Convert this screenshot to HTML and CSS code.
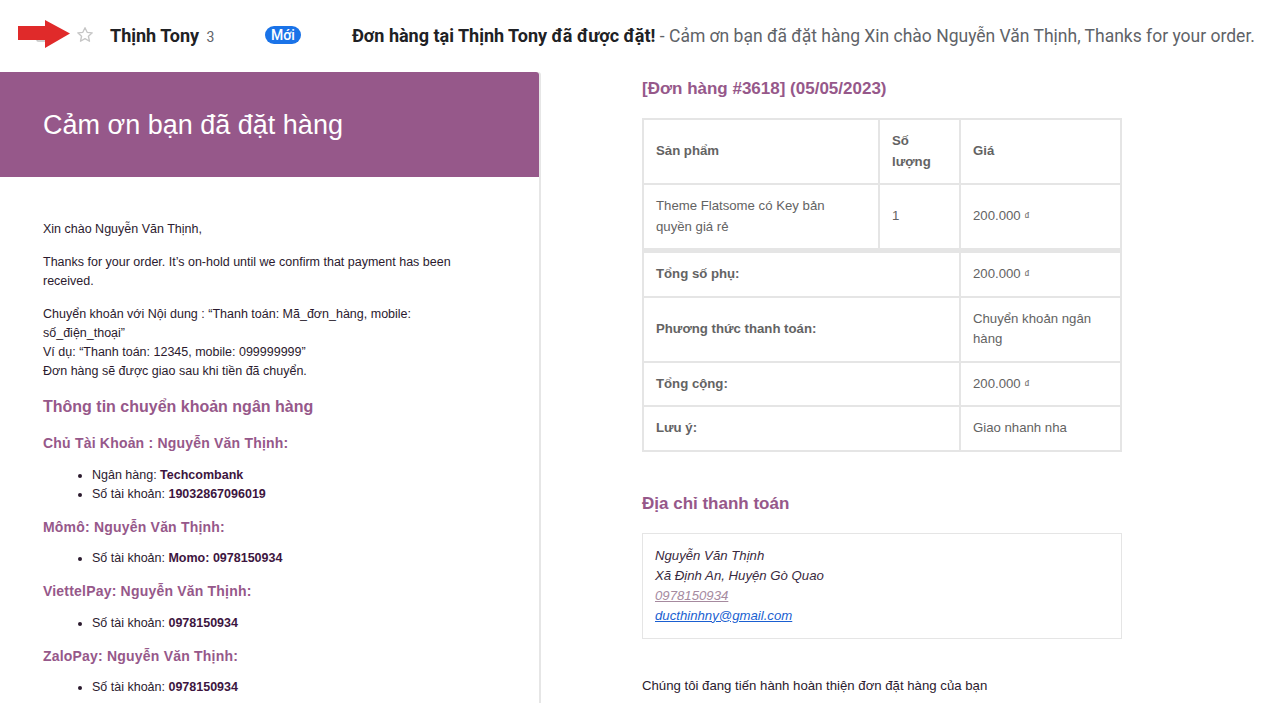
FILE: index.html
```html
<!DOCTYPE html>
<html lang="vi">
<head>
    <meta charset="UTF-8">
    <meta name="viewport" content="width=device-width, initial-scale=1.0">
    <title>Đơn hàng tại Thịnh Tony đã được đặt!</title>
    <link rel="stylesheet" href="styles.css">
</head>
<body>
    <!-- Dòng thư trong hộp thư -->
    <div class="mail-row">
        <svg class="pointer" width="56" height="32" viewBox="0 0 56 32">
            <rect x="20" y="9" width="12" height="13" rx="1" fill="none" stroke="#c2c2c2" stroke-width="1.5"/>
            <polygon points="1,7 28,7 28,1 53,14.5 28,29 28,21 1,21" fill="#e02a2a"/>
        </svg>
        <svg class="star" width="20" height="20" viewBox="0 0 24 24">
            <path d="M12 3.2l2.6 5.6 6.1.6-4.6 4.1 1.3 6-5.4-3.1-5.4 3.1 1.3-6-4.6-4.1 6.1-.6z" fill="none" stroke="#c6c6c6" stroke-width="1.6" stroke-linejoin="round"/>
        </svg>
        <div class="from">Thịnh Tony <span class="count">3</span></div>
        <span class="badge">Mới</span>
        <div class="subject"><b>Đơn hàng tại Thịnh Tony đã được đặt!</b> <span class="snippet">- Cảm ơn bạn đã đặt hàng Xin chào Nguyễn Văn Thịnh, Thanks for your order.</span></div>
    </div>

    <div class="mail-body">
        <!-- Cột trái -->
        <div class="email-card">
            <div class="email-header">
                <h1>Cảm ơn bạn đã đặt hàng</h1>
            </div>
            <div class="email-content">
                <p>Xin chào Nguyễn Văn Thịnh,</p>
                <p>Thanks for your order. It’s on-hold until we confirm that payment has been received.</p>
                <p>Chuyển khoản với Nội dung : “Thanh toán: Mã_đơn_hàng, mobile: số_điện_thoại”<br>
                Ví dụ: “Thanh toán: 12345, mobile: 099999999”<br>
                Đơn hàng sẽ được giao sau khi tiền đã chuyển.</p>

                <h2>Thông tin chuyển khoản ngân hàng</h2>

                <h3>Chủ Tài Khoản : Nguyễn Văn Thịnh:</h3>
                <ul>
                    <li>Ngân hàng: <strong>Techcombank</strong></li>
                    <li>Số tài khoản: <strong>19032867096019</strong></li>
                </ul>

                <h3>Mômô: Nguyễn Văn Thịnh:</h3>
                <ul>
                    <li>Số tài khoản: <strong>Momo: 0978150934</strong></li>
                </ul>

                <h3>ViettelPay: Nguyễn Văn Thịnh:</h3>
                <ul>
                    <li>Số tài khoản: <strong>0978150934</strong></li>
                </ul>

                <h3>ZaloPay: Nguyễn Văn Thịnh:</h3>
                <ul>
                    <li>Số tài khoản: <strong>0978150934</strong></li>
                </ul>
            </div>
        </div>

        <!-- Cột phải -->
        <div class="order-col">
            <h2>[Đơn hàng #3618] (05/05/2023)</h2>

            <table class="order-table">
                <thead>
                    <tr>
                        <th class="col-product">Sản phẩm</th>
                        <th class="col-qty">Số lượng</th>
                        <th class="col-price">Giá</th>
                    </tr>
                </thead>
                <tbody>
                    <tr>
                        <td>Theme Flatsome có Key bản quyền giá rẻ</td>
                        <td>1</td>
                        <td>200.000 <span class="currency">₫</span></td>
                    </tr>
                </tbody>
                <tfoot>
                    <tr class="first">
                        <th colspan="2">Tổng số phụ:</th>
                        <td>200.000 <span class="currency">₫</span></td>
                    </tr>
                    <tr>
                        <th colspan="2">Phương thức thanh toán:</th>
                        <td>Chuyển khoản ngân hàng</td>
                    </tr>
                    <tr>
                        <th colspan="2">Tổng cộng:</th>
                        <td>200.000 <span class="currency">₫</span></td>
                    </tr>
                    <tr>
                        <th colspan="2">Lưu ý:</th>
                        <td>Giao nhanh nha</td>
                    </tr>
                </tfoot>
            </table>

            <h2 class="address-title">Địa chỉ thanh toán</h2>
            <address class="address">
                Nguyễn Văn Thịnh<br>
                Xã Định An, Huyện Gò Quao<br>
                <a href="#" class="phone">0978150934</a><br>
                <a href="#" class="mail">ducthinhny@gmail.com</a>
            </address>

            <p class="closing">Chúng tôi đang tiến hành hoàn thiện đơn đặt hàng của bạn</p>
        </div>
    </div>
</body>
</html>
```

FILE: styles.css
```css
/* Reset */
* {
    margin: 0;
    padding: 0;
    box-sizing: border-box;
}

body {
    background: #fff;
    font-family: "Liberation Sans", Arial, sans-serif;
    width: 1280px;
    height: 720px;
    overflow: hidden;
}

/* Dòng thư */
.mail-row {
    display: flex;
    align-items: center;
    height: 72px;
    padding-left: 17px;
    padding-bottom: 2px;
    font-family: Roboto, "Liberation Sans", sans-serif;
    font-size: 17.5px;
    color: #202124;
    white-space: nowrap;
}

.pointer {
    display: block;
}

.star {
    display: block;
    margin-left: 2px;
}

.from {
    width: 155px;
    margin-left: 15px;
    font-weight: 700;
    font-size: 18px;
}

.count {
    font-weight: 400;
    font-size: 14px;
    color: #5f6368;
    margin-left: 3px;
}

.badge {
    background: #1a73e8;
    color: #fff;
    font-size: 14px;
    font-weight: 500;
    line-height: 18px;
    padding: 0 6px;
    border-radius: 9px;
    margin-right: 51px;
}

.subject b {
    font-weight: 700;
    font-size: 18px;
}

.snippet {
    color: #5f6368;
}

/* Nội dung thư */
.mail-body {
    display: flex;
    align-items: flex-start;
}

.email-card {
    width: 541px;
    border-right: 2px solid #e6e6e6;
    border-top-right-radius: 3px;
}

.email-header {
    background: #96588a;
    height: 105px;
    padding: 0 43px;
    display: flex;
    align-items: center;
    border-top-right-radius: 3px;
}

.email-header h1 {
    color: #fff;
    font-size: 27px;
    font-weight: 400;
    margin-top: 2px;
}

.email-content {
    padding: 43px 43px 6px;
    font-size: 12.5px;
    line-height: 19px;
    color: #2b1a2e;
}

.email-content p {
    margin-bottom: 14px;
}

.email-content p:nth-child(2) {
    padding-right: 30px;
}

.email-content p:nth-child(3) {
    padding-right: 40px;
}

.email-content h2 {
    color: #96588a;
    font-size: 16px;
    line-height: 22px;
    font-weight: 700;
    margin-top: 15px;
}

.email-content h3 {
    color: #96588a;
    font-size: 14px;
    line-height: 18px;
    letter-spacing: 0.2px;
    font-weight: 700;
    margin: 14px 0 13.5px;
}

.email-content h2 + h3 {
    margin-top: 16px;
}

.email-content ul {
    padding-left: 49px;
}

.email-content strong {
    color: #3d1540;
}

/* Cột đơn hàng */
.order-col {
    width: 480px;
    margin-left: 101px;
    font-size: 13.2px;
    color: #636363;
}

.order-col h2 {
    color: #96588a;
    font-size: 17px;
    line-height: 22px;
    font-weight: 700;
    margin-top: 6px;
    margin-bottom: 18px;
}

.order-table {
    width: 480px;
    border: 1px solid #e5e5e5;
    border-spacing: 0;
    border-collapse: separate;
}

.order-table th,
.order-table td {
    border: 1px solid #e5e5e5;
    padding: 11px 12px;
    line-height: 20.5px;
    text-align: left;
    vertical-align: middle;
}

.order-table th {
    font-weight: 700;
}

.col-product {
    width: 236px;
}

.col-qty {
    width: 81px;
}

.order-table tbody td:first-child {
    padding-right: 30px;
}

.order-table tfoot tr.first th,
.order-table tfoot tr.first td {
    border-top-width: 4px;
}

.currency {
    font-size: 11px;
}

.order-col .address-title {
    margin-top: 41px;
    margin-bottom: 18px;
}

.address {
    border: 1px solid #e5e5e5;
    padding: 12px;
    line-height: 20px;
    color: #3a2a3e;
}

.address .phone {
    color: #a68a9f;
}

.address .mail {
    color: #1a5fd1;
}

.closing {
    margin-top: 37px;
    line-height: 20px;
    color: #2b1a2e;
}
```
